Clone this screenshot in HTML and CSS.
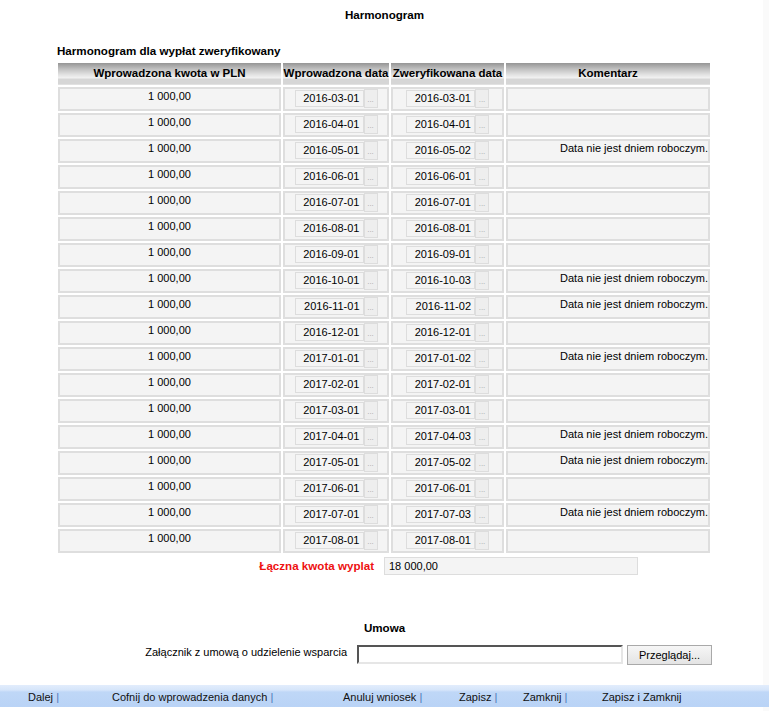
FILE: index.html
```html
<!DOCTYPE html>
<html lang="pl">
<head>
<meta charset="utf-8">
<title>Harmonogram</title>
<link rel="stylesheet" href="styles.css">
</head>
<body>
<div class="title">Harmonogram</div>
<div class="subtitle">Harmonogram dla wypłat zweryfikowany</div>
<table class="grid">
  <colgroup>
    <col class="c1"><col class="c2"><col class="c3"><col class="c4">
  </colgroup>
  <thead>
    <tr><th>Wprowadzona kwota w PLN</th><th>Wprowadzona data</th><th>Zweryfikowana data</th><th>Komentarz</th></tr>
  </thead>
  <tbody>
    <tr><td>1 000,00</td><td><div class="date"><span class="inp">2016-03-01</span><span class="btn">...</span></div></td><td><div class="date"><span class="inp">2016-03-01</span><span class="btn">...</span></div></td><td class="com"></td></tr>
    <tr><td>1 000,00</td><td><div class="date"><span class="inp">2016-04-01</span><span class="btn">...</span></div></td><td><div class="date"><span class="inp">2016-04-01</span><span class="btn">...</span></div></td><td class="com"></td></tr>
    <tr><td>1 000,00</td><td><div class="date"><span class="inp">2016-05-01</span><span class="btn">...</span></div></td><td><div class="date"><span class="inp">2016-05-02</span><span class="btn">...</span></div></td><td class="com">Data nie jest dniem roboczym.</td></tr>
    <tr><td>1 000,00</td><td><div class="date"><span class="inp">2016-06-01</span><span class="btn">...</span></div></td><td><div class="date"><span class="inp">2016-06-01</span><span class="btn">...</span></div></td><td class="com"></td></tr>
    <tr><td>1 000,00</td><td><div class="date"><span class="inp">2016-07-01</span><span class="btn">...</span></div></td><td><div class="date"><span class="inp">2016-07-01</span><span class="btn">...</span></div></td><td class="com"></td></tr>
    <tr><td>1 000,00</td><td><div class="date"><span class="inp">2016-08-01</span><span class="btn">...</span></div></td><td><div class="date"><span class="inp">2016-08-01</span><span class="btn">...</span></div></td><td class="com"></td></tr>
    <tr><td>1 000,00</td><td><div class="date"><span class="inp">2016-09-01</span><span class="btn">...</span></div></td><td><div class="date"><span class="inp">2016-09-01</span><span class="btn">...</span></div></td><td class="com"></td></tr>
    <tr><td>1 000,00</td><td><div class="date"><span class="inp">2016-10-01</span><span class="btn">...</span></div></td><td><div class="date"><span class="inp">2016-10-03</span><span class="btn">...</span></div></td><td class="com">Data nie jest dniem roboczym.</td></tr>
    <tr><td>1 000,00</td><td><div class="date"><span class="inp">2016-11-01</span><span class="btn">...</span></div></td><td><div class="date"><span class="inp">2016-11-02</span><span class="btn">...</span></div></td><td class="com">Data nie jest dniem roboczym.</td></tr>
    <tr><td>1 000,00</td><td><div class="date"><span class="inp">2016-12-01</span><span class="btn">...</span></div></td><td><div class="date"><span class="inp">2016-12-01</span><span class="btn">...</span></div></td><td class="com"></td></tr>
    <tr><td>1 000,00</td><td><div class="date"><span class="inp">2017-01-01</span><span class="btn">...</span></div></td><td><div class="date"><span class="inp">2017-01-02</span><span class="btn">...</span></div></td><td class="com">Data nie jest dniem roboczym.</td></tr>
    <tr><td>1 000,00</td><td><div class="date"><span class="inp">2017-02-01</span><span class="btn">...</span></div></td><td><div class="date"><span class="inp">2017-02-01</span><span class="btn">...</span></div></td><td class="com"></td></tr>
    <tr><td>1 000,00</td><td><div class="date"><span class="inp">2017-03-01</span><span class="btn">...</span></div></td><td><div class="date"><span class="inp">2017-03-01</span><span class="btn">...</span></div></td><td class="com"></td></tr>
    <tr><td>1 000,00</td><td><div class="date"><span class="inp">2017-04-01</span><span class="btn">...</span></div></td><td><div class="date"><span class="inp">2017-04-03</span><span class="btn">...</span></div></td><td class="com">Data nie jest dniem roboczym.</td></tr>
    <tr><td>1 000,00</td><td><div class="date"><span class="inp">2017-05-01</span><span class="btn">...</span></div></td><td><div class="date"><span class="inp">2017-05-02</span><span class="btn">...</span></div></td><td class="com">Data nie jest dniem roboczym.</td></tr>
    <tr><td>1 000,00</td><td><div class="date"><span class="inp">2017-06-01</span><span class="btn">...</span></div></td><td><div class="date"><span class="inp">2017-06-01</span><span class="btn">...</span></div></td><td class="com"></td></tr>
    <tr><td>1 000,00</td><td><div class="date"><span class="inp">2017-07-01</span><span class="btn">...</span></div></td><td><div class="date"><span class="inp">2017-07-03</span><span class="btn">...</span></div></td><td class="com">Data nie jest dniem roboczym.</td></tr>
    <tr><td>1 000,00</td><td><div class="date"><span class="inp">2017-08-01</span><span class="btn">...</span></div></td><td><div class="date"><span class="inp">2017-08-01</span><span class="btn">...</span></div></td><td class="com"></td></tr>
  </tbody>
</table>
<div class="total">
  <div class="total-label">Łączna kwota wyplat</div>
  <div class="total-box">18 000,00</div>
</div>
<div class="umowa">Umowa</div>
<div class="attach">
  <div class="attach-label">Załącznik z umową o udzielenie wsparcia</div>
  <div class="file"></div>
  <div class="browse">Przeglądaj...</div>
</div>
<div class="footer">
  <span>Dalej <b class="sep">|</b></span>
  <span>Cofnij do wprowadzenia danych <b class="sep">|</b></span>
  <span>Anuluj wniosek <b class="sep">|</b></span>
  <span>Zapisz <b class="sep">|</b></span>
  <span>Zamknij <b class="sep">|</b></span>
  <span>Zapisz i Zamknij</span>
</div>
</body>
</html>
```
FILE: styles.css
```css
html {
  background: linear-gradient(to right, #ffffff 763px, #fafafa 763px);
}
body {
  margin: 0;
  font-family: "Liberation Sans", Arial, sans-serif;
  font-size: 11px;
  color: #000;
}
.title {
  text-align: center;
  font-weight: bold;
  font-size: 11.6px;
  line-height: 14px;
  padding-top: 8px;
}
.subtitle {
  font-weight: bold;
  font-size: 11.6px;
  line-height: 14px;
  margin: 22px 0 0 57px;
}
.grid {
  margin: 3px 0 0 56px;
  border-collapse: separate;
  border-spacing: 2px;
  table-layout: fixed;
  width: 656px;
}
.c1 { width: 223px; }
.c2 { width: 106px; }
.c3 { width: 113px; }
.c4 { width: 204px; }
.grid th {
  height: 22px;
  box-sizing: border-box;
  padding: 3px 0 0;
  vertical-align: top;
  line-height: 14px;
  font-weight: bold;
  font-size: 11.5px;
  white-space: nowrap;
  overflow: hidden;
  background: linear-gradient(to bottom, #959595 0px, #c0c0c0 6px, #e4e4e4 12px, #f2f2f2 15px, #d6d6d6 16px, #d6d6d6 21px, #ececec 22px);
}
.grid td {
  height: 24px;
  box-sizing: border-box;
  padding: 0;
  border: 2px solid #dedede;
  background: #f4f4f4;
  vertical-align: top;
  text-align: center;
  line-height: 14px;
  white-space: nowrap;
}
.grid td.com {
  text-align: right;
}
.date {
  display: flex;
  justify-content: center;
  align-items: center;
  height: 19px;
}
.inp {
  box-sizing: border-box;
  width: 69px;
  height: 17px;
  border: 1px solid #dddddd;
  background: #f4f4f4;
  text-align: right;
  padding-right: 3px;
  line-height: 15px;
}
.btn {
  box-sizing: border-box;
  width: 14px;
  height: 19px;
  border: 1px solid #dddddd;
  background: #eeeeee;
  color: #a8a8a8;
  font-size: 8px;
  line-height: 19px;
  text-align: center;
}
.total {
  display: grid;
  grid-template-columns: 374px 254px;
  column-gap: 10px;
  align-items: center;
  margin-top: 2px;
}
.total-label {
  text-align: right;
  color: #ee1111;
  font-weight: bold;
  font-size: 11.6px;
  line-height: 14px;
}
.total-box {
  box-sizing: border-box;
  height: 18px;
  border: 1px solid #dddddd;
  background: #f4f4f4;
  padding-left: 4px;
  line-height: 16px;
}
.umowa {
  text-align: center;
  font-weight: bold;
  font-size: 11.6px;
  line-height: 14px;
  margin-top: 46px;
}
.attach {
  display: flex;
  align-items: flex-start;
  margin-top: 10px;
}
.attach-label {
  width: 347px;
  text-align: right;
  line-height: 14px;
}
.file {
  box-sizing: border-box;
  width: 266px;
  height: 19px;
  margin-left: 10px;
  background: #fff;
  border: 2px solid;
  border-color: #555555 #e6e6e6 #e6e6e6 #555555;
}
.browse {
  box-sizing: border-box;
  width: 85px;
  height: 20px;
  margin-left: 4px;
  border: 1px solid #a9a9a9;
  background: linear-gradient(to bottom, #f6f6f6, #e4e4e4);
  text-align: center;
  line-height: 18px;
}
.footer {
  display: grid;
  grid-template-columns: 84px 231px 116px 64px 79px auto;
  margin-top: 20px;
  height: 22px;
  box-sizing: border-box;
  padding: 5px 0 0 28px;
  line-height: 14px;
  color: #111111;
  white-space: nowrap;
  background: linear-gradient(to bottom, #e2edfc 0px, #d6e5fa 5px, #bfd7f7 7px, #b9d3f6 22px);
}
.sep {
  font-weight: normal;
  color: #4a78b8;
}
```
